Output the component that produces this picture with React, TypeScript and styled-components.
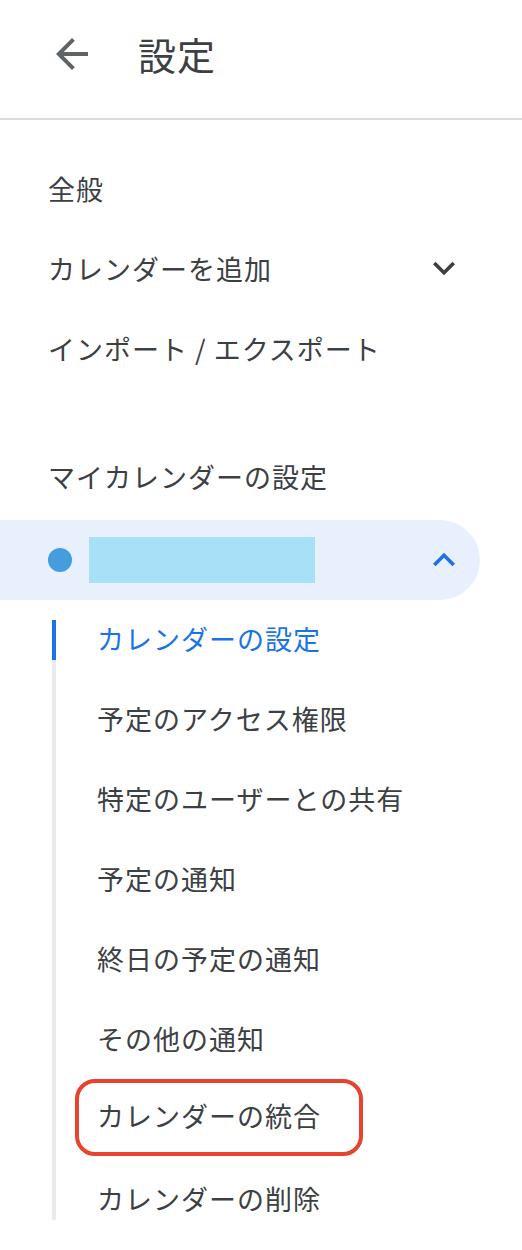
import styled, { createGlobalStyle } from "styled-components";

const GlobalStyle = createGlobalStyle`
  body {
    margin: 0;
    background: #fff;
    font-family: "Noto Sans CJK JP", "Noto Sans", Roboto, sans-serif;
    color: #3c4043;
  }
`;

const Page = styled.div`
  width: 522px;
  height: 1250px;
  overflow: hidden;
`;

const Header = styled.header`
  height: 108px;
  padding: 0 0 10px 48px;
  display: flex;
  align-items: center;
  gap: 42px;
  border-bottom: 2px solid #dadce0;
  box-sizing: content-box;
`;

const BackIcon = styled.svg`
  width: 48px;
  height: 48px;
  fill: #5f6368;
`;

const Title = styled.h1`
  margin: 0;
  font-size: 38px;
  font-weight: 400;
  letter-spacing: 1px;
  color: #3c4043;
  line-height: 1;
`;

const Nav = styled.nav`
  display: flex;
  flex-direction: column;
  padding-top: 30px;
`;

const Row = styled.div<{ $gap?: number }>`
  height: 80px;
  box-sizing: border-box;
  display: flex;
  align-items: center;
  justify-content: space-between;
  padding: 0 56px 4px 48px;
  margin-top: ${(p) => p.$gap ?? 0}px;
  font-size: 27px;
  letter-spacing: 1px;
  color: #3c4043;
`;

const Chevron = styled.svg<{ $color: string }>`
  width: 44px;
  height: 44px;
  fill: ${(p) => p.$color};
`;

const CalendarRow = styled.div`
  height: 80px;
  width: 480px;
  margin-top: 2px;
  display: flex;
  align-items: center;
  padding: 0 14px 0 48px;
  box-sizing: border-box;
  background: #e8f0fe;
  border-radius: 0 40px 40px 0;
`;

const Dot = styled.span`
  width: 24px;
  height: 24px;
  border-radius: 50%;
  background: #459de0;
  flex-shrink: 0;
`;

const Redacted = styled.span`
  width: 226px;
  height: 46px;
  margin-left: 17px;
  background: #a8e0f8;
`;

const Spacer = styled.span`
  flex: 1;
`;

const SubList = styled.div`
  position: relative;
  margin-left: 52px;
  display: flex;
  flex-direction: column;

  &::before {
    content: "";
    position: absolute;
    left: 0;
    top: 20px;
    bottom: 20px;
    width: 4px;
    background: #e8eaed;
  }
`;

const SubItem = styled.div<{ $active?: boolean }>`
  position: relative;
  height: 80px;
  box-sizing: border-box;
  display: flex;
  align-items: center;
  padding: 0 0 4px 45px;
  font-size: 27px;
  letter-spacing: 1px;
  color: ${(p) => (p.$active ? "#1a73e8" : "#3c4043")};

  &::before {
    content: "";
    display: ${(p) => (p.$active ? "block" : "none")};
    position: absolute;
    left: 0;
    top: 20px;
    width: 4px;
    height: 40px;
    background: #1a73e8;
  }
`;

const Circled = styled.span`
  display: flex;
  align-items: center;
  height: 77px;
  box-sizing: border-box;
  margin: 0 0 2px -22px;
  padding: 0 38px 3px 18px;
  border: 4px solid #e8432e;
  border-radius: 20px;
`;

const subItems = [
  "予定のアクセス権限",
  "特定のユーザーとの共有",
  "予定の通知",
  "終日の予定の通知",
  "その他の通知",
];

export default function App() {
  return (
    <Page>
      <GlobalStyle />
      <Header>
        <BackIcon viewBox="0 0 24 24">
          <path d="M20 11H7.83l5.59-5.59L12 4l-8 8 8 8 1.41-1.41L7.83 13H20v-2z" />
        </BackIcon>
        <Title>設定</Title>
      </Header>
      <Nav>
        <Row>全般</Row>
        <Row>
          カレンダーを追加
          <Chevron $color="#3c4043" viewBox="0 0 24 24">
            <path d="M16.59 8.59L12 13.17 7.41 8.59 6 10l6 6 6-6z" />
          </Chevron>
        </Row>
        <Row>インポート / エクスポート</Row>
        <Row $gap={48}>マイカレンダーの設定</Row>
        <CalendarRow>
          <Dot />
          <Redacted />
          <Spacer />
          <Chevron $color="#1a73e8" viewBox="0 0 24 24">
            <path d="M12 8l-6 6 1.41 1.41L12 10.83l4.59 4.58L18 14z" />
          </Chevron>
        </CalendarRow>
        <SubList>
          <SubItem $active>カレンダーの設定</SubItem>
          {subItems.map((s) => (
            <SubItem key={s}>{s}</SubItem>
          ))}
          <SubItem>
            <Circled>カレンダーの統合</Circled>
          </SubItem>
          <SubItem>カレンダーの削除</SubItem>
        </SubList>
      </Nav>
    </Page>
  );
}
